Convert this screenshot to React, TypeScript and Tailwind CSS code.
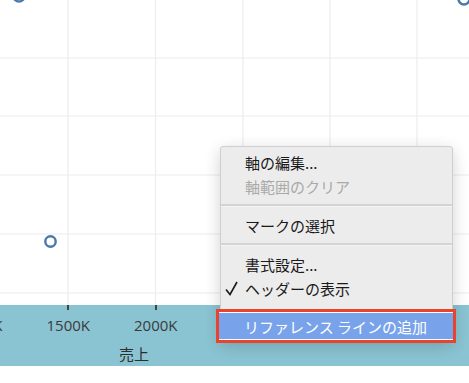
import React from "react";

const jp = { fontFamily: '"Noto Sans CJK JP", "Noto Sans", sans-serif' };

function Chart() {
  const vx = [68, 155.5, 243, 330, 417];
  const hy = [58, 116, 175, 234, 293];
  return (
    <svg width="469" height="305" className="block">
      {vx.map((x) => (
        <line key={"v" + x} x1={x} y1={0} x2={x} y2={305} stroke="#ececec" strokeWidth="1.2" />
      ))}
      {hy.map((y) => (
        <line key={"h" + y} x1={0} y1={y} x2={469} y2={y} stroke="#ececec" strokeWidth="1.2" />
      ))}
      <circle cx="19" cy="-4" r="5.5" fill="none" stroke="#4a78ab" strokeWidth="2.5" />
      <circle cx="464" cy="-1" r="5.5" fill="none" stroke="#4a78ab" strokeWidth="2.5" />
      <circle cx="50.5" cy="241.5" r="5.2" fill="none" stroke="#4a78ab" strokeWidth="2.4" />
    </svg>
  );
}

function Sep() {
  return (
    <div className="py-[6px]">
      <div className="h-[2px] bg-[#d4d4d4] border-b border-[#f4f4f4] box-content" />
    </div>
  );
}

function Item({ children, muted, check }: { children: React.ReactNode; muted?: boolean; check?: boolean }) {
  return (
    <div
      className={`relative h-[24px] flex items-center gap-[7px] pl-[4px] text-[15px] leading-none ${
        muted ? "text-[#a9a9a9]" : "text-[#1a1a1a]"
      }`}
    >
      <div className="w-[13px] h-[15px] flex items-center">
        {check && (
          <svg width="13" height="15" viewBox="0 0 13 15">
            <path d="M1 8.5 L5 13.5 L12 1" fill="none" stroke="#1a1a1a" strokeWidth="1.6" />
          </svg>
        )}
      </div>
      <span>{children}</span>
    </div>
  );
}

function Tick({ label }: { label: string }) {
  return (
    <div className="w-[87.5px] flex flex-col items-center">
      <div className="w-[2px] h-[5px] bg-[#444]" />
      <div className="pt-[8px] leading-none">{label}</div>
    </div>
  );
}

export default function App() {
  return (
    <div className="relative w-[469px] h-[383px] bg-white overflow-hidden" style={jp}>
      <Chart />
      <div className="h-[61px] bg-[#8ac3d2] flex flex-col">
        <div
          className="flex -ml-[63px] text-[15px] text-[#3a3a3a]"
          style={{ fontFamily: '"Open Sans", "Noto Sans", sans-serif' }}
        >
          <Tick label="1000K" />
          <Tick label="1500K" />
          <Tick label="2000K" />
          <Tick label="" />
        </div>
        <div className="pl-[119px] pt-[13px] text-[15px] text-[#2e2e2e] leading-none">売上</div>
      </div>

      <div className="absolute left-[220px] top-[146px] w-[233px] h-[196px] bg-[#ececec] border border-[#cfcfcf] rounded-[3px] shadow-[0_4px_16px_rgba(0,0,0,0.18)] pt-[3px]">
        <Item>軸の編集...</Item>
        <Item muted>軸範囲のクリア</Item>
        <Sep />
        <Item>マークの選択</Item>
        <Sep />
        <Item>書式設定...</Item>
        <Item check>ヘッダーの表示</Item>
      </div>

      <div className="absolute left-[216px] top-[309px] w-[240px] h-[34px] border-[3px] border-[#e8432b] bg-white py-[1px]">
        <div className="h-full bg-[#78a3ea] flex items-center pl-[25px] text-white text-[15px] leading-none">
          リファレンス ラインの追加
        </div>
      </div>
    </div>
  );
}
